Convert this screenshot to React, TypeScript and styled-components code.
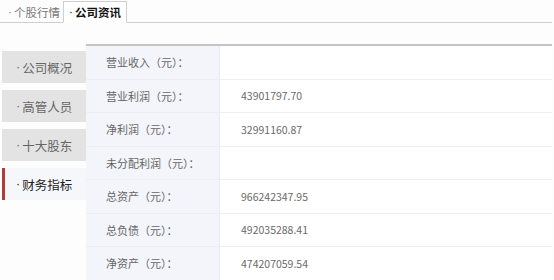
import React from "react";
import styled, { createGlobalStyle } from "styled-components";

const GlobalStyle = createGlobalStyle`
  html, body {
    margin: 0;
    padding: 0;
    background: #fdfdfd;
    font-family: "Noto Sans CJK SC", "Noto Sans", sans-serif;
  }
`;

const Page = styled.div`
  width: 554px;
  height: 280px;
  overflow: hidden;
`;

const TabBar = styled.div`
  display: flex;
  align-items: flex-end;
  height: 22px;
  border-bottom: 1px solid #cfcfcf;
  margin-right: 2px;
`;

const Tab = styled.div<{ $active?: boolean }>`
  width: ${(p) => (p.$active ? "64px" : "63px")};
  height: ${(p) => (p.$active ? "22px" : "21px")};
  margin-bottom: ${(p) => (p.$active ? "-1px" : "0")};
  padding-left: ${(p) => (p.$active ? "0" : "5px")};
  box-sizing: border-box;
  display: flex;
  align-items: center;
  justify-content: center;
  white-space: nowrap;
  font-size: 11.5px;
  color: ${(p) => (p.$active ? "#111" : "#777")};
  font-weight: ${(p) => (p.$active ? 700 : 400)};
  background: ${(p) => (p.$active ? "#fff" : "transparent")};
  border: 1px solid ${(p) => (p.$active ? "#cfcfcf" : "transparent")};
  border-bottom-color: ${(p) => (p.$active ? "#fff" : "transparent")};
`;

const Dot = styled.span`
  font-family: "Liberation Sans", sans-serif;
  font-weight: 400;
  margin-right: 2px;
`;

const Body = styled.div`
  display: flex;
  padding-top: 20px;
`;

const Menu = styled.div`
  width: 86px;
  padding-top: 8px;
  display: flex;
  flex-direction: column;
  gap: 7px;
`;

const MenuItem = styled.div<{ $active?: boolean }>`
  height: 32px;
  margin-left: 2px;
  box-sizing: border-box;
  display: flex;
  align-items: center;
  padding-left: 11px;
  white-space: nowrap;
  font-size: 12.5px;
  color: ${(p) => (p.$active ? "#222" : "#666")};
  background: ${(p) => (p.$active ? "#f6f7fb" : "#e3e3e3")};
  border-left: 3px solid ${(p) => (p.$active ? "#b53a3a" : "#e3e3e3")};
`;

const Table = styled.div`
  width: 466px;
  border-top: 2px solid #c4c4c4;
  margin-top: 1px;
`;

const Row = styled.div`
  display: grid;
  grid-template-columns: 134px 1fr;
  height: 33.5px;
  border-bottom: 1px solid #eceef2;
  box-sizing: border-box;
`;

const Label = styled.div`
  background: #f3f5fa;
  border-right: 1px solid #e6e9ef;
  display: flex;
  align-items: center;
  padding-left: 20px;
  font-size: 11px;
  color: #666;
`;

const Value = styled.div`
  display: flex;
  align-items: center;
  padding-left: 21px;
  font-size: 10.5px;
  color: #6a6a6a;
  background: #fff;
`;

const menu = ["公司概况", "高管人员", "十大股东", "财务指标"];

const rows: [string, string][] = [
  ["营业收入（元）：", ""],
  ["营业利润（元）：", "43901797.70"],
  ["净利润（元）：", "32991160.87"],
  ["未分配利润（元）：", ""],
  ["总资产（元）：", "966242347.95"],
  ["总负债（元）：", "492035288.41"],
  ["净资产（元）：", "474207059.54"],
];

export default function App() {
  return (
    <Page>
      <GlobalStyle />
      <TabBar>
        <Tab>
          <Dot>·</Dot>个股行情
        </Tab>
        <Tab $active>
          <Dot>·</Dot>公司资讯
        </Tab>
      </TabBar>
      <Body>
        <Menu>
          {menu.map((m, i) => (
            <MenuItem key={m} $active={i === 3}>
              <Dot>·</Dot>
              {m}
            </MenuItem>
          ))}
        </Menu>
        <Table>
          {rows.map(([l, v]) => (
            <Row key={l}>
              <Label>{l}</Label>
              <Value>{v}</Value>
            </Row>
          ))}
        </Table>
      </Body>
    </Page>
  );
}
